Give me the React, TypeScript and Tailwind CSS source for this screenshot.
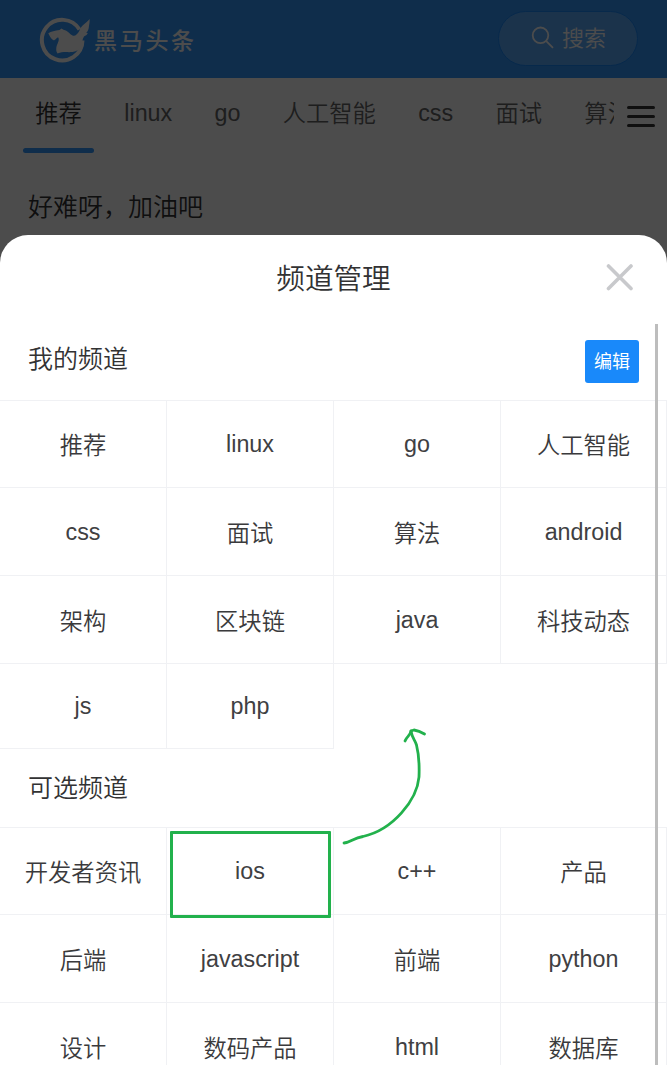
import { Fragment } from "react";

const tabs = ["linux", "go", "人工智能", "css", "面试", "算法"];
const mine: string[][] = [
  ["推荐", "linux", "go", "人工智能"],
  ["css", "面试", "算法", "android"],
  ["架构", "区块链", "java", "科技动态"],
  ["js", "php"],
];
const optional: string[][] = [
  ["开发者资讯", "ios", "c++", "产品"],
  ["后端", "javascript", "前端", "python"],
  ["设计", "数码产品", "html", "数据库"],
];
const mineHeights = ["h-[87px]", "h-[88px]", "h-[88px]", "h-[85px]"];
const optionalHeights = ["h-[87px]", "h-[88px]", "h-[88px]"];

function isLatin(s: string) {
  return /^[a-z+]+$/.test(s);
}

function Grid({ rows, heights }: { rows: string[][]; heights: string[] }) {
  return (
    <div className="grid grid-cols-[167px_167px_167px_166px] text-[23.3px] leading-[32px] text-[#3a3a3c]">
      {rows.map((row, r) => (
        <Fragment key={r}>
          {row.map((name) => (
            <div
              key={name}
              className={`${heights[r]} relative flex items-center justify-center border-r border-b border-[#f0f1f4]`}
            >
              <span className={isLatin(name) ? "text-[#404042]" : r === 0 ? "pt-[3px]" : "pt-[5px]"}>{name}</span>
              {name === "ios" && (
                <div className="absolute top-[3px] left-[3px] h-[87px] w-[161px] rounded-[1px] border-[3px] border-[#22b14c]" />
              )}
            </div>
          ))}
        </Fragment>
      ))}
    </div>
  );
}

function Logo() {
  return (
    <svg width="52" height="50" viewBox="0 0 52 50" className="mt-[3px] text-white" fill="none">
      <path d="M40.500 14.500 A20.300 20.300 0 1 0 43.500 25.500" stroke="currentColor" strokeWidth="4" />
      <path
        d="M50.700 4 C47 8.500 42 10.500 40.500 15.500 C38.500 19.500 36 21.500 33.500 20.500 C30 18.500 29 15.500 24.500 14.700 L22.500 13.500 L20.500 15 C16 15.500 12 16.500 9.300 18.300 C10.500 21 12 24 14.500 25.300 C16.500 25.500 17 22.500 19.300 22.500 C21 25.500 17.500 29.500 17.300 33 C17 35.500 17.500 37 18.500 38.500 C24 36.300 28 37.500 33.500 37 C38 36 41 34.500 42.300 31 C43.500 28 43 24.500 45 21.500 C46.500 20.500 48.200 20 48.800 18 L47.200 18 C49 16 49.800 14 49.900 11.500 C50.500 9 50.700 6.500 50.700 4 Z"
        fill="currentColor"
      />
    </svg>
  );
}

export default function App() {
  return (
    <div className="relative flex h-[1065px] w-[667px] flex-col overflow-hidden bg-white font-['Liberation_Sans','Noto_Sans_CJK_SC',sans-serif] font-[350]">
      <header className="flex h-[78px] shrink-0 items-center bg-[#3296fa] pr-[29px] pb-[1px] pl-[39px] text-white">
        <Logo />
        <span className="mt-[4px] ml-[3px] text-[23px] leading-[32px] font-medium tracking-[2.700px]">黑马头条</span>
        <div className="ml-auto flex h-[55px] w-[140px] items-center justify-center gap-[8px] rounded-full border border-[#1989fa] bg-[#5babfb] text-[22px] leading-[30px]">
          <svg width="23" height="23" viewBox="0 0 23 23" className="ml-[1px] mt-[-2px]" fill="none" stroke="currentColor" strokeWidth="1.800">
            <circle cx="9.500" cy="9.300" r="7.800" />
            <path d="M15 14.800 L22 21.800" />
          </svg>
          搜索
        </div>
      </header>
      <nav className="flex h-[82px] shrink-0 items-start pl-[23px] text-[23.300px] leading-[32px] text-[#646566]">
        <div className="flex w-[591px] items-start overflow-hidden whitespace-nowrap">
          <div className="flex w-[71px] shrink-0 flex-col items-center pt-[20px] text-[#323233]">
            推荐
            <div className="mt-[18px] h-[5px] w-[71px] rounded-full bg-[#3296fa]" />
          </div>
          <div className="flex gap-[42.300px] pt-[19px] pl-[30.300px]">
            {tabs.map((t) => (
              <span key={t} className={isLatin(t) ? "" : "pt-[1px]"}>
                {t}
              </span>
            ))}
          </div>
        </div>
        <div className="mt-[28px] ml-[13px] flex w-[28px] flex-col gap-[6px]">
          <div className="h-[3px] rounded-full bg-[#323233]" />
          <div className="h-[3px] rounded-full bg-[#323233]" />
          <div className="h-[3px] rounded-full bg-[#323233]" />
        </div>
      </nav>
      <p className="pt-[29px] pl-[28px] text-[25px] leading-[36px] text-[#323233]">好难呀，加油吧</p>

      <div className="absolute inset-0 bg-black/70" />

      <section className="absolute inset-x-0 top-[235px] bottom-0 flex flex-col overflow-hidden rounded-t-[28px] bg-white text-[#323233]">
        <div className="grid h-[89px] shrink-0 grid-cols-[1fr_auto_1fr] items-center pr-[33px] pb-[3px]">
          <h1 className="col-start-2 pt-[1px] pl-[33px] text-[28.600px] leading-[40px]">频道管理</h1>
          <svg className="mb-[2px] justify-self-end" width="28" height="28" viewBox="0 0 28 28" fill="none" stroke="#c8c9cc" strokeWidth="3.600" strokeLinecap="round">
            <path d="M2.500 3 L25 25.500 M25 3 L2.500 25.500" />
          </svg>
        </div>
        <div className="flex h-[77px] shrink-0 items-center justify-between border-b border-[#f0f1f4] pr-[28px] pl-[28px]">
          <h2 className="pb-[6px] text-[25px] leading-[36px]">我的频道</h2>
          <button className="mt-[-2px] h-[43px] w-[54px] rounded-[3px] bg-[#1989fa] pt-[1px] text-[18px] leading-[42px] font-normal text-white">编辑</button>
        </div>
        <Grid rows={mine} heights={mineHeights} />
        <div className="flex h-[79px] shrink-0 items-center border-b border-[#f0f1f4] pl-[28px]">
          <h2 className="text-[25px] leading-[36px]">可选频道</h2>
        </div>
        <Grid rows={optional} heights={optionalHeights} />
      </section>

      <div className="absolute top-[324px] right-[9px] bottom-0 w-[3px] bg-[#bdbdbd]" />
      <svg className="absolute top-[720px] left-[335px]" width="105" height="135" viewBox="0 0 105 135" fill="none" stroke="#22b14c" strokeWidth="2.800" strokeLinecap="round" strokeLinejoin="round">
        <path d="M9 123 C16 122.500 18 118 28 116.500 C58 110 82 80 84 57 C84.500 45 83 31 81.500 25 C80 20 77 18 76 11" />
        <path d="M70 21 C71.500 16.500 75.500 15.500 76 11 L79 10 C82 10.500 86 12 89.500 14" />
      </svg>
    </div>
  );
}
